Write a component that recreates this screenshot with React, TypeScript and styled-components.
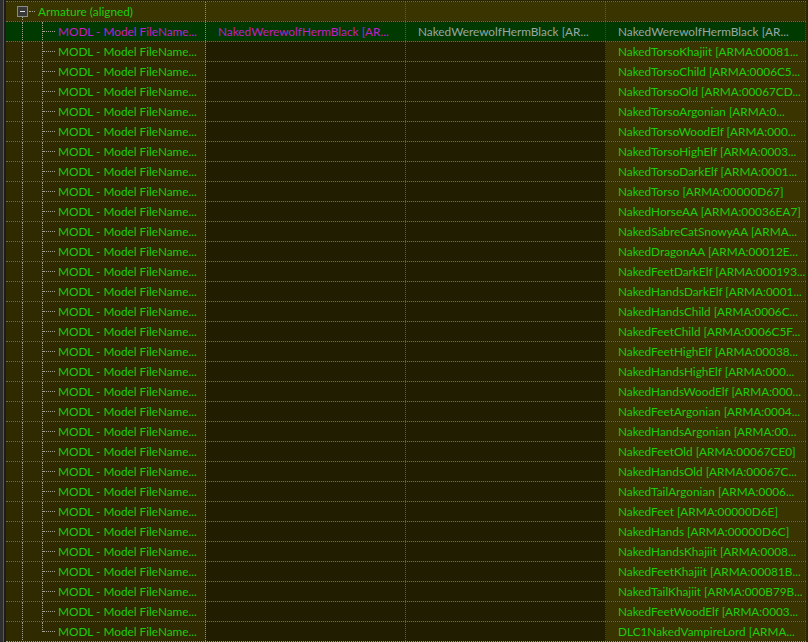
import styled, { createGlobalStyle } from 'styled-components'

const GlobalStyle = createGlobalStyle`
body {
  margin: 0;
  background: #2a2600;
  font-family: Lato, "Noto Sans", sans-serif;
  font-size: 11.8px;
}
`

const Page = styled.div`
display: flex;
width: 808px;
height: 642px;
overflow: hidden;
background: #2a2600;
`

const Gutter = styled.div`
width: 6px;
flex: none;
background: #2e2e2e;
border-right: 2px solid #1c1c1c;
box-shadow: inset -1px 0 0 #5a5a5a;
box-sizing: border-box;
`

const Table = styled.div`
width: 800px;
flex: none;
padding-top: 1px;
display: flex;
flex-direction: column;
`

const Row = styled.div`
display: flex;
height: 20px;
flex: none;
box-sizing: border-box;
border-bottom: 1px dotted #6c6a5c;
&:first-child {
  border-top: 1px dotted #6c6a5c;
  height: 21px;
}
&:last-child {
  border-bottom-color: #a09e90;
}
`

type Tone = 'green' | 'magenta' | 'grey'

const colors: Record<Tone, string> = {
  green: '#20cc10',
  magenta: '#c41cc8',
  grey: '#9aa6a4',
}

const Cell = styled.div<{ $bg: string; $tone: Tone; $edge?: string }>`
width: 200px;
flex: none;
box-sizing: border-box;
padding: 0 1px 0 12px;
background: ${(p) => p.$bg};
color: ${(p) => colors[p.$tone]};
border-right: 1px dotted ${(p) => p.$edge || '#5c5a4c'};
line-height: 19px;
white-space: nowrap;
overflow: hidden;
`

const TreeCell = styled.div<{ $bg: string; $tone: Tone }>`
width: 200px;
flex: none;
box-sizing: border-box;
display: flex;
padding-left: 6px;
background: ${(p) => p.$bg};
color: ${(p) => colors[p.$tone]};
border-right: 1px dotted #8e8c80;
line-height: 19px;
white-space: nowrap;
overflow: hidden;
`

const Label = styled.span`
padding-left: 6px;
overflow: hidden;
`

type Line = 'full' | 'top' | 'box'

const Slot = styled.span<{ $line: Line; $elbow?: boolean }>`
position: relative;
width: 20px;
flex: none;
&::before {
  content: '';
  position: absolute;
  left: 10px;
  top: ${(p) => (p.$line === 'box' ? '15px' : '0')};
  height: ${(p) => (p.$line === 'top' ? '10px' : 'auto')};
  bottom: ${(p) => (p.$line === 'top' ? 'auto' : '-1px')};
  border-left: 1px dotted #a4a296;
}
&::after {
  content: '';
  display: ${(p) => (p.$elbow ? 'block' : 'none')};
  position: absolute;
  left: ${(p) => (p.$line === 'box' ? '17px' : '11px')};
  top: 9px;
  width: ${(p) => (p.$line === 'box' ? '6px' : '12px')};
  border-top: 1px dotted #a4a296;
}
`

const Toggle = styled.span`
position: absolute;
left: 5px;
top: 4px;
width: 11px;
height: 11px;
box-sizing: border-box;
border: 1px solid #8a8a8a;
background: #383838;
z-index: 1;
&::before {
  content: '';
  position: absolute;
  left: 2px;
  right: 2px;
  top: 4px;
  height: 1px;
  background: #e4e4e4;
}
`

const OLIVE = '#3a3400'
const TREE = '#2f2a00'
const DARK = '#211d00'
const SELECTED = '#003a00'

const arma = [
  'NakedWerewolfHermBlack [AR...',
  'NakedTorsoKhajiit [ARMA:00081...',
  'NakedTorsoChild [ARMA:0006C5...',
  'NakedTorsoOld [ARMA:00067CD...',
  'NakedTorsoArgonian [ARMA:0...',
  'NakedTorsoWoodElf [ARMA:000...',
  'NakedTorsoHighElf [ARMA:0003...',
  'NakedTorsoDarkElf [ARMA:0001...',
  'NakedTorso [ARMA:00000D67]',
  'NakedHorseAA [ARMA:00036EA7]',
  'NakedSabreCatSnowyAA [ARMA...',
  'NakedDragonAA [ARMA:00012E...',
  'NakedFeetDarkElf [ARMA:000193...',
  'NakedHandsDarkElf [ARMA:0001...',
  'NakedHandsChild [ARMA:0006C...',
  'NakedFeetChild [ARMA:0006C5F...',
  'NakedFeetHighElf [ARMA:00038...',
  'NakedHandsHighElf [ARMA:000...',
  'NakedHandsWoodElf [ARMA:000...',
  'NakedFeetArgonian [ARMA:0004...',
  'NakedHandsArgonian [ARMA:00...',
  'NakedFeetOld [ARMA:00067CE0]',
  'NakedHandsOld [ARMA:00067C...',
  'NakedTailArgonian [ARMA:0006...',
  'NakedFeet [ARMA:00000D6E]',
  'NakedHands [ARMA:00000D6C]',
  'NakedHandsKhajiit [ARMA:0008...',
  'NakedFeetKhajiit [ARMA:00081B...',
  'NakedTailKhajiit [ARMA:000B79B...',
  'NakedFeetWoodElf [ARMA:0003...',
  'DLC1NakedVampireLord [ARMA...',
]

const App = () => {
  return (
    <>
      <GlobalStyle />
      <Page>
        <Gutter />
        <Table>
          <Row>
            <TreeCell $bg={OLIVE} $tone="green">
              <Slot $line="box" $elbow>
                <Toggle />
              </Slot>
              <Label>Armature (aligned)</Label>
            </TreeCell>
            <Cell $bg={OLIVE} $tone="green" />
            <Cell $bg={OLIVE} $tone="green" />
            <Cell $bg={OLIVE} $tone="green" $edge="#4a4838" />
          </Row>
          {arma.map((name, i) => {
            const sel = i === 0
            const last = i === arma.length - 1
            return (
              <Row key={i}>
                <TreeCell $bg={sel ? SELECTED : TREE} $tone={sel ? 'magenta' : 'green'}>
                  <Slot $line="full" />
                  <Slot $line={last ? 'top' : 'full'} $elbow />
                  <Label>MODL - Model FileName...</Label>
                </TreeCell>
                <Cell $bg={sel ? SELECTED : DARK} $tone="magenta">
                  {sel ? 'NakedWerewolfHermBlack [AR...' : ''}
                </Cell>
                <Cell $bg={sel ? SELECTED : DARK} $tone="grey" $edge="#44423a">
                  {sel ? 'NakedWerewolfHermBlack [AR...' : ''}
                </Cell>
                <Cell $bg={sel ? SELECTED : OLIVE} $tone={sel ? 'grey' : 'green'} $edge="#4a4838">
                  {name}
                </Cell>
              </Row>
            )
          })}
        </Table>
      </Page>
    </>
  )
}

export default App
